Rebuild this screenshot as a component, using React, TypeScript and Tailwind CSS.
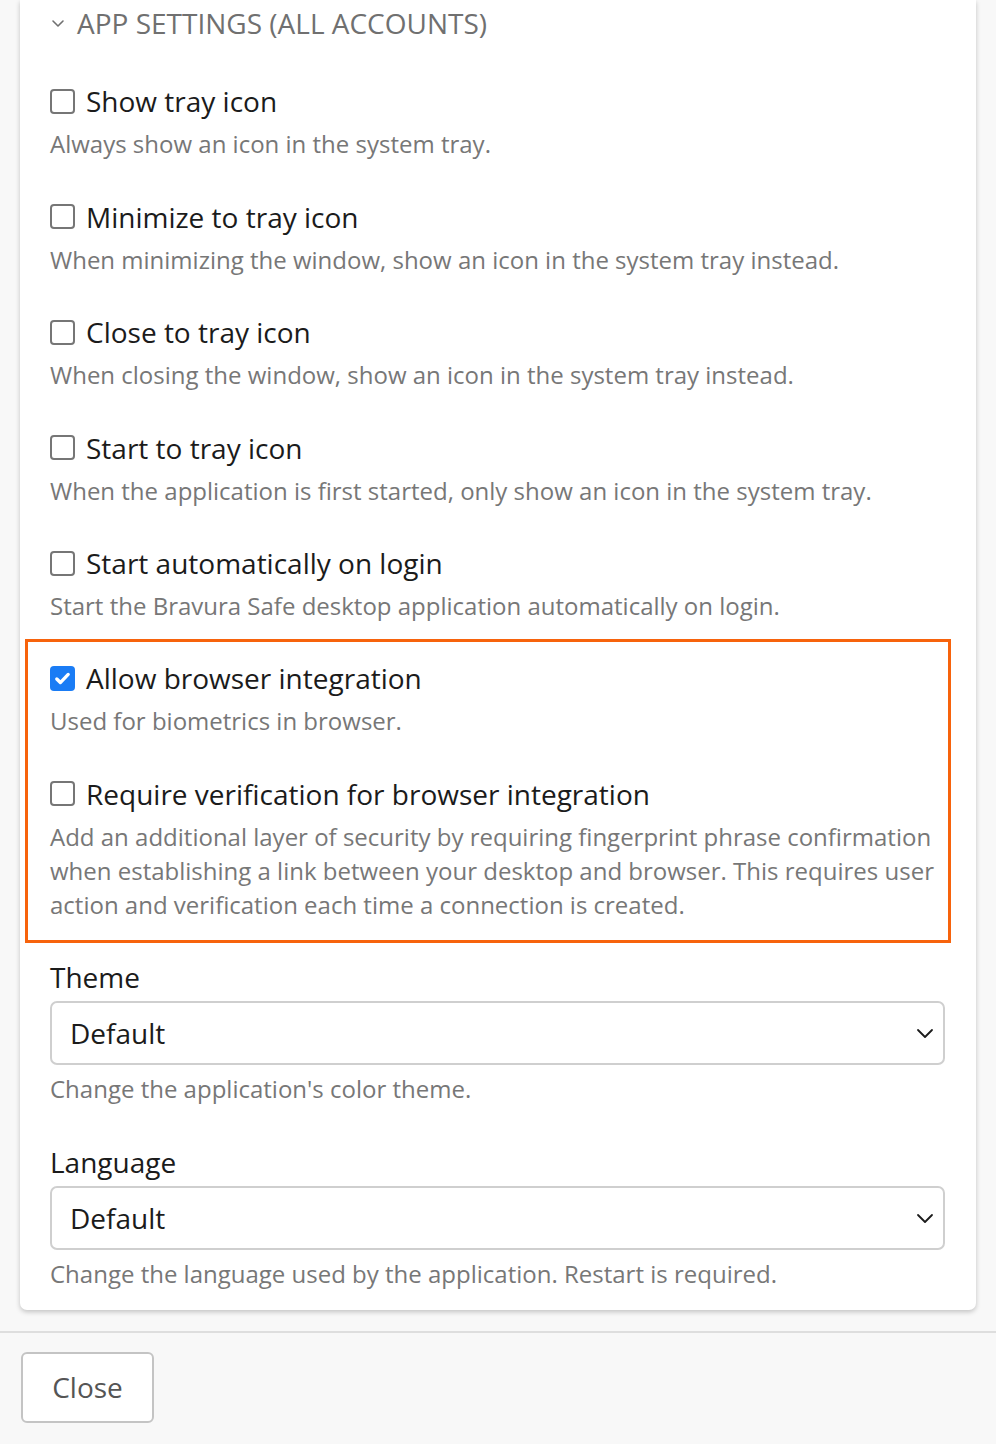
import React from "react";

const Check = ({ checked }: { checked?: boolean }) =>
  checked ? (
    <span className="flex h-[25px] w-[25px] shrink-0 items-center justify-center rounded-[4px] bg-[#1a7cf5]">
      <svg width="19" height="19" viewBox="0 0 16 16" fill="none">
        <path d="M3.2 8.4l3 3L12.8 4.6" stroke="#fff" strokeWidth="2.8" strokeLinecap="round" strokeLinejoin="round" />
      </svg>
    </span>
  ) : (
    <span className="block h-[25px] w-[25px] shrink-0 rounded-[4px] border-2 border-[#767676] bg-white" />
  );

const Item = ({ label, desc, checked, className = "" }: { label: string; desc: React.ReactNode; checked?: boolean; className?: string }) => (
  <div className={className}>
    <div className="flex items-center gap-[11px] text-[28px] leading-[36px] text-[#1b1b1b]">
      <Check checked={checked} />
      <span>{label}</span>
    </div>
    <div className="mt-[8px] text-[24px] leading-[34px] text-[#777777]">{desc}</div>
  </div>
);

const Chevron = () => (
  <svg width="24" height="24" viewBox="0 0 24 24" fill="none">
    <path d="M5 9l7 7 7-7" stroke="#1b1b1b" strokeWidth="1.8" strokeLinecap="round" strokeLinejoin="round" />
  </svg>
);

const Select = () => (
  <div className="mt-[6px] flex h-[64px] items-center justify-between rounded-[7px] border-2 border-[#cfcfcf] bg-white pl-[18px] pr-[6px] text-[28px] text-[#1b1b1b]">
    <span>Default</span>
    <Chevron />
  </div>
);

export default function App() {
  return (
    <div className="min-h-[1444px] w-[996px] bg-[#f8f8f8]" style={{ fontFamily: '"Open Sans", "Noto Sans", sans-serif' }}>
      <div className="mx-[20px] rounded-b-[7px] bg-white pb-[19px] pl-[30px] pr-[31px] shadow-[0_2px_5px_rgba(0,0,0,0.22)]">
        <div className="flex items-center gap-[11px] pt-[5px] text-[28px] leading-[36px] text-[#707070]">
          <svg width="16" height="16" viewBox="0 0 16 16" fill="none">
            <path d="M3 6l5 5 5-5" stroke="#707070" strokeWidth="1.6" strokeLinecap="round" strokeLinejoin="round" />
          </svg>
          <span>APP SETTINGS (ALL ACCOUNTS)</span>
        </div>
        <Item className="mt-[42px]" label="Show tray icon" desc="Always show an icon in the system tray." />
        <Item className="mt-[37.5px]" label="Minimize to tray icon" desc="When minimizing the window, show an icon in the system tray instead." />
        <Item className="mt-[37.5px]" label="Close to tray icon" desc="When closing the window, show an icon in the system tray instead." />
        <Item className="mt-[37.5px]" label="Start to tray icon" desc="When the application is first started, only show an icon in the system tray." />
        <Item className="mt-[37.5px]" label="Start automatically on login" desc="Start the Bravura Safe desktop application automatically on login." />
        <div className="ml-[-25px] mr-[-6px] mt-[16px] border-[3px] border-[#f7630c] pb-[18px] pl-[22px] pr-[3px] pt-[18px]">
          <Item label="Allow browser integration" desc="Used for biometrics in browser." checked />
          <Item
            className="mt-[37.5px]"
            label="Require verification for browser integration"
            desc="Add an additional layer of security by requiring fingerprint phrase confirmation when establishing a link between your desktop and browser. This requires user action and verification each time a connection is created."
          />
        </div>
        <div className="mt-[16px] text-[28px] leading-[36px] text-[#1b1b1b]">Theme</div>
        <Select />
        <div className="mt-[7px] text-[24px] leading-[34px] text-[#777777]">Change the application's color theme.</div>
        <div className="mt-[38px] text-[28px] leading-[36px] text-[#1b1b1b]">Language</div>
        <Select />
        <div className="mt-[7px] text-[24px] leading-[34px] text-[#777777]">Change the language used by the application. Restart is required.</div>
      </div>
      <div className="mt-[21px] border-t-2 border-[#dedede] px-[21px] pt-[19px]">
        <button className="flex h-[71px] w-[133px] items-center justify-center rounded-[6px] border-2 border-[#c4c4c4] bg-white text-[28px] text-[#555555]">
          Close
        </button>
      </div>
    </div>
  );
}
